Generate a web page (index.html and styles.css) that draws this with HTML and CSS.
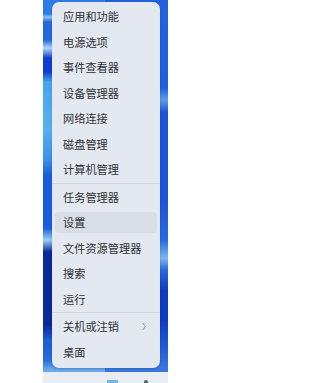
FILE: index.html
```html
<!DOCTYPE html>
<html lang="zh-CN">
<head>
<meta charset="utf-8">
<link rel="stylesheet" href="styles.css">
</head>
<body>
<div class="screen">
  <div class="blank"></div>
  <div class="desktop">
    <div class="menu">
      <div class="row"><div class="item">应用和功能</div></div>
      <div class="row"><div class="item">电源选项</div></div>
      <div class="row"><div class="item">事件查看器</div></div>
      <div class="row"><div class="item">设备管理器</div></div>
      <div class="row"><div class="item">网络连接</div></div>
      <div class="row"><div class="item">磁盘管理</div></div>
      <div class="row"><div class="item">计算机管理</div></div>
      <div class="sep"></div>
      <div class="row"><div class="item">任务管理器</div></div>
      <div class="row"><div class="item hover">设置</div></div>
      <div class="row"><div class="item">文件资源管理器</div></div>
      <div class="row"><div class="item">搜索</div></div>
      <div class="row"><div class="item">运行</div></div>
      <div class="sep"></div>
      <div class="row"><div class="item">关机或注销<svg class="chev" width="6" height="9" viewBox="0 0 6 9"><polyline points="1.5,1 4.5,4.5 1.5,8" fill="none" stroke="#8a8f98" stroke-width="1"/></svg></div></div>
      <div class="row"><div class="item">桌面</div></div>
    </div>
    <div class="fill"></div>
    <div class="taskbar">
      <div class="tb-icon blue"></div>
      <div class="tb-icon dark"></div>
    </div>
  </div>
</div>
</body>
</html>
```

FILE: styles.css
```css
html, body {
  margin: 0;
  padding: 0;
  background: #ffffff;
}
body {
  width: 232px;
  height: 383px;
  overflow: hidden;
  font-family: "Noto Sans CJK SC", "Noto Sans", sans-serif;
}
.screen {
  display: flex;
  height: 383px;
}
.blank {
  width: 43px;
  flex: none;
}
.desktop {
  width: 125px;
  flex: none;
  display: flex;
  flex-direction: column;
  background-color: #1d5fdc;
  background-image:
    linear-gradient(180deg,
      #2a7de8 0px, #2a7de8 14px, #8cc4f5 17px, #2468e0 22px, #2468e0 40px,
      #b0d8f8 48px, #0f3fcf 58px, #0f3fcf 72px, #46a6ec 82px, #56b0ee 130px,
      #3a90e8 160px, #1a5ee0 175px, #1a5ee0 228px, #9ad0f5 240px, #0a2a9a 252px,
      #0a2a9a 325px, #1c5ed8 340px, #2a6ad8 360px, #6aa8ec 370px),
    linear-gradient(180deg,
      #2262e2 0px, #1e5fe0 88px, #5aa0f0 100px, #1a55d8 112px, #1a55d8 200px,
      #2a6ae0 240px, #7ab8f0 258px, #2a6ae0 270px, #0e3cc0 290px, #0e3cc0 320px,
      #1a58d8 345px, #3a78e0 370px);
  background-size: 62px 100%, 63px 100%;
  background-position: left top, right top;
  background-repeat: no-repeat;
}
.menu {
  margin: 2px 0 0 9px;
  width: 108px;
  box-sizing: border-box;
  padding: 1.5px 0 3.5px;
  background: #e4e8f1;
  border-radius: 7px;
  box-shadow: 0 1px 3px rgba(0,0,0,0.15);
}
.row {
  height: 25.5px;
  padding: 2.25px 3px;
  box-sizing: border-box;
}
.item {
  height: 21px;
  border-radius: 4px;
  padding-left: 8px;
  display: flex;
  align-items: center;
  font-size: 11.2px;
  color: #2f3135;
  white-space: nowrap;
}
.item.hover {
  background: #d9dde6;
}
.chev {
  margin-left: 22px;
}
.sep {
  height: 1px;
  margin: 0.5px 0;
  background: #d3d7df;
}
.fill {
  flex: 1;
}
.taskbar {
  height: 11px;
  background: #e9edf3;
  position: relative;
}
.tb-icon {
  position: absolute;
  bottom: 0;
  height: 3px;
}
.tb-icon.blue {
  left: 64px;
  width: 11px;
  background: #7fb4ea;
}
.tb-icon.dark {
  left: 101px;
  width: 4px;
  background: #5a6270;
  border-radius: 2px 2px 0 0;
}
```
